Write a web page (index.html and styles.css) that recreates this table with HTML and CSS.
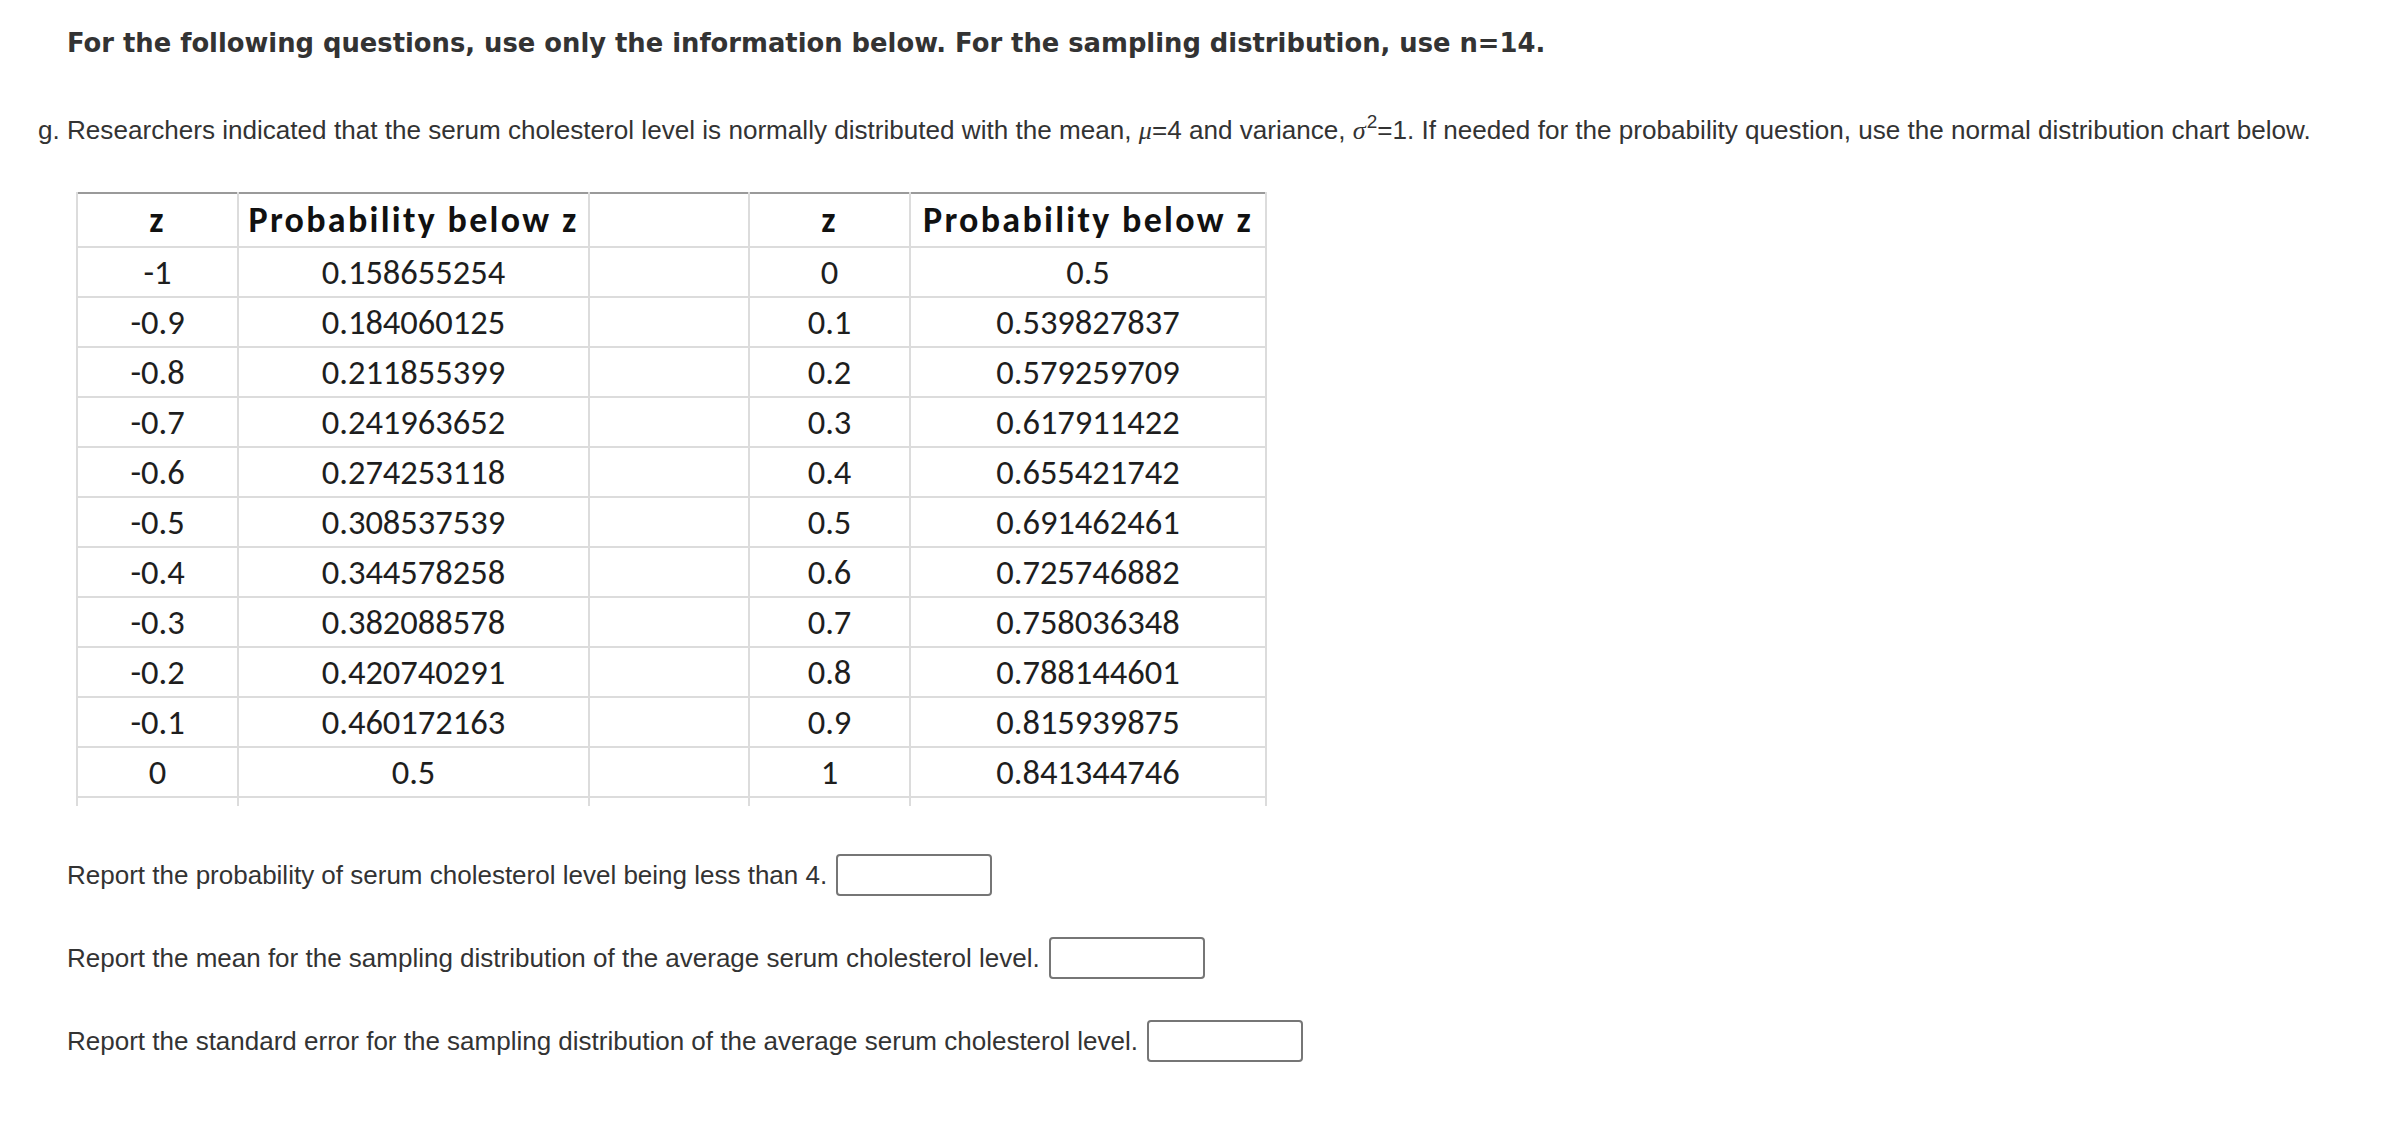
FILE: index.html
```html
<!DOCTYPE html>
<html>
<head>
<meta charset="utf-8">
<link rel="stylesheet" href="styles.css">
</head>
<body>
<main class="page">
  <p class="lead">For the following questions, use only the information below. For the sampling distribution, use n=14.</p>
  <p class="intro">g. Researchers indicated that the serum cholesterol level is normally distributed with the mean, <i class="sym">μ</i>=4 and variance, <i class="sym">σ</i><sup>2</sup>=1. If needed for the probability question, use the normal distribution chart below.</p>
  <table class="ztable">
    <colgroup>
      <col class="c1"><col class="c2"><col class="c3"><col class="c4"><col class="c5">
    </colgroup>
    <thead>
      <tr><th>z</th><th>Probability below z</th><th></th><th>z</th><th>Probability below z</th></tr>
    </thead>
    <tbody>
      <tr><td>-1</td><td>0.158655254</td><td></td><td>0</td><td>0.5</td></tr>
      <tr><td>-0.9</td><td>0.184060125</td><td></td><td>0.1</td><td>0.539827837</td></tr>
      <tr><td>-0.8</td><td>0.211855399</td><td></td><td>0.2</td><td>0.579259709</td></tr>
      <tr><td>-0.7</td><td>0.241963652</td><td></td><td>0.3</td><td>0.617911422</td></tr>
      <tr><td>-0.6</td><td>0.274253118</td><td></td><td>0.4</td><td>0.655421742</td></tr>
      <tr><td>-0.5</td><td>0.308537539</td><td></td><td>0.5</td><td>0.691462461</td></tr>
      <tr><td>-0.4</td><td>0.344578258</td><td></td><td>0.6</td><td>0.725746882</td></tr>
      <tr><td>-0.3</td><td>0.382088578</td><td></td><td>0.7</td><td>0.758036348</td></tr>
      <tr><td>-0.2</td><td>0.420740291</td><td></td><td>0.8</td><td>0.788144601</td></tr>
      <tr><td>-0.1</td><td>0.460172163</td><td></td><td>0.9</td><td>0.815939875</td></tr>
      <tr><td>0</td><td>0.5</td><td></td><td>1</td><td>0.841344746</td></tr>
      <tr class="stub"><td></td><td></td><td></td><td></td><td></td></tr>
    </tbody>
  </table>
  <div class="questions">
    <p class="q">Report the probability of serum cholesterol level being less than 4. <input class="answer" type="text"></p>
    <p class="q">Report the mean for the sampling distribution of the average serum cholesterol level. <input class="answer" type="text"></p>
    <p class="q">Report the standard error for the sampling distribution of the average serum cholesterol level. <input class="answer" type="text"></p>
  </div>
</main>
</body>
</html>
```
FILE: styles.css
```css
html, body {
  margin: 0;
  padding: 0;
  background: #ffffff;
}
.page {
  padding: 28px 0 0 38px;
  color: #333333;
  font-family: "Liberation Sans", Arial, sans-serif;
}
.lead {
  margin: 0 0 0 29px;
  font-family: "DejaVu Sans", Verdana, sans-serif;
  font-weight: bold;
  font-size: 25.8px;
  line-height: 30px;
  color: #333333;
}
.intro {
  margin: 57px 0 0 0;
  font-size: 26.1px;
  line-height: 30px;
}
.sym {
  font-family: "Liberation Serif", "Times New Roman", serif;
  font-style: italic;
}
.intro sup {
  font-size: 19px;
  line-height: 0;
  vertical-align: 11px;
  margin-left: 1px;
}
.ztable {
  margin: 46px 0 0 38px;
  border-collapse: collapse;
  table-layout: fixed;
  width: 1189px;
  font-family: Carlito, Calibri, Lato, sans-serif;
  color: #1e1e1e;
  border-top: 2px solid #9a9a9a;
  border-left: 2px solid #cfcfcf;
}
.c1 { width: 161px; }
.c2 { width: 351px; }
.c3 { width: 160px; }
.c4 { width: 161px; }
.c5 { width: 356px; }
.ztable th,
.ztable td {
  text-align: center;
  padding: 0;
  border: 2px solid #dcdcdc;
  border-top: none;
}
.ztable th {
  height: 52px;
  font-size: 36px;
  letter-spacing: 2.3px;
  font-weight: bold;
  color: #111111;
}
.ztable td {
  height: 48px;
  font-size: 34.5px;
}
.ztable .stub td {
  height: 8px;
  border-bottom: none;
}
.questions {
  margin: 48px 0 0 29px;
}
.q {
  margin: 0 0 41px 0;
  font-size: 26px;
  line-height: 42px;
  display: flex;
  align-items: center;
  gap: 2px;
  white-space: pre;
}
.answer {
  box-sizing: border-box;
  width: 156px;
  height: 42px;
  margin: 0;
  border: 2px solid #767676;
  border-radius: 4px;
  background: #ffffff;
}
```
